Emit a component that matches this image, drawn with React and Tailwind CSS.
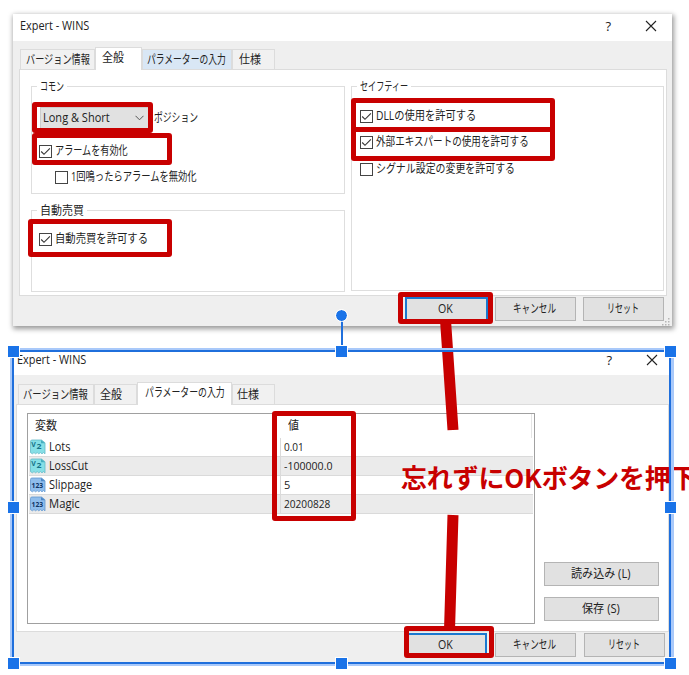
import { useLayoutEffect, useRef, useState } from 'react';
import clsx from 'clsx';

// Squeezes or stretches a single-line label to a fixed pixel width
function FitText({ w, className, children }) {
  const ref = useRef(null);
  const [scale, setScale] = useState(1);

  useLayoutEffect(() => {
    if (ref.current?.offsetWidth) setScale(w / ref.current.offsetWidth);
  }, [w, children]);

  return (
    <span className={clsx('block shrink-0 whitespace-nowrap', className)} style={{ width: w }}>
      <span ref={ref} className="inline-block origin-left" style={{ transform: `scaleX(${scale})` }}>
        {children}
      </span>
    </span>
  );
}

function Checkbox({ checked, label, w, className }) {
  return (
    <div className={clsx('flex h-[14px] items-center gap-[3px]', className)}>
      <span className="flex h-[13px] w-[13px] shrink-0 items-center justify-center border border-[#444] bg-white">
        {checked && (
          <svg viewBox="0 0 11 11" className="h-[11px] w-[11px]" fill="none" stroke="#333" strokeWidth="1.1">
            <path d="M1.2 5.5 4 8.3 9.9 2.4" />
          </svg>
        )}
      </span>
      <FitText w={w}>{label}</FitText>
    </div>
  );
}

function GroupBox({ title, titleWidth, className, children }) {
  return (
    <div className={clsx('border border-[#dedede]', className)}>
      <div className="-mt-[9px] ml-[5px] flex h-[18px] w-fit items-center bg-white px-[3px]">
        <FitText w={titleWidth}>{title}</FitText>
      </div>
      {children}
    </div>
  );
}

function Button({ label, w, primary, className }) {
  return (
    <button
      className={clsx(
        'flex h-[24px] shrink-0 items-center justify-center bg-[#e1e1e1] pr-[2px]',
        primary ? 'border-2 border-[#1a78d0]' : 'border border-[#b4b4b4]',
        className
      )}
    >
      <FitText w={w}>{label}</FitText>
    </button>
  );
}

function TitleBar({ className }) {
  return (
    <div className={clsx('flex items-center bg-white', className)}>
      <FitText w={69} className="text-[12px]">
        Expert - WINS
      </FitText>
      <span className="mr-[34px] ml-auto text-[13px] font-medium">?</span>
      <svg viewBox="0 0 12 12" className="h-[12px] w-[12px]" stroke="#222" strokeWidth="1.1">
        <path d="M1 1 11 11M11 1 1 11" />
      </svg>
    </div>
  );
}

function Tab({ label, w, active, hover, className }) {
  return (
    <div
      className={clsx(
        'flex shrink-0 border border-b-0 border-[#dcdcdc]',
        active ? 'z-10 -mb-px h-[23px] bg-white pt-[2px]' : 'h-[20px] items-center',
        hover && 'bg-[#d9e7f5]',
        !active && !hover && 'bg-[#f1f1f1]',
        className
      )}
    >
      <FitText w={w}>{label}</FitText>
    </div>
  );
}

function VarIcon({ type }) {
  const isDouble = type === 'double';
  return (
    <svg viewBox="0 0 16 16" className="h-[16px] w-[16px] shrink-0">
      <path
        d="M.5 2.5Q.5 1 2 1H11.5L15 3.8V14.8L13.5 13.6 12 14.8 10.4 13.6 8.8 14.8 7.2 13.6 5.6 14.8 4 13.6 2.4 14.8.5 13.6Z"
        fill={isDouble ? '#86dfe6' : '#8fbdec'}
        stroke={isDouble ? '#62b9c6' : '#5f97d0'}
        strokeWidth=".8"
      />
      <path d="M11 1 15 4.2H11Z" fill={isDouble ? '#45adbe' : '#4b87c7'} />
      {isDouble ? (
        <g fill="#17748a" fontWeight="bold" fontSize="7">
          <text x="1.2" y="8">V</text>
          <text x="6.6" y="10" textLength="5" lengthAdjust="spacingAndGlyphs">
            2
          </text>
        </g>
      ) : (
        <text x="1.6" y="11.2" fontSize="7" fontWeight="bold" fill="#0e3566" textLength="11.5" lengthAdjust="spacingAndGlyphs">
          123
        </text>
      )}
    </svg>
  );
}

const variables = [
  { name: 'Lots', nameWidth: 21, type: 'double', value: '0.01', valueWidth: 20 },
  { name: 'LossCut', nameWidth: 39, type: 'double', value: '-100000.0', valueWidth: 48 },
  { name: 'Slippage', nameWidth: 43, type: 'int', value: '5', valueWidth: 6 },
  { name: 'Magic', nameWidth: 31, type: 'int', value: '20200828', valueWidth: 46 },
];

function GeneralDialog() {
  return (
    <div className="flex h-[312px] w-[659px] flex-col bg-[#efefef] shadow-[1px_2px_5px_1px_rgba(0,0,0,0.4)]">
      <TitleBar className="h-[27px] pr-[15px] pb-[3px] pl-[7px]" />
      <div className="mt-[6px] ml-[7px] flex h-[22px] items-end">
        <Tab label="バージョン情報" w={64} className="w-[75px] pl-[5px]" />
        <Tab label="全般" w={22} active className="w-[47px] pl-[6px]" />
        <Tab label="パラメーターの入力" w={79} hover className="w-[90px] pl-[4px]" />
        <Tab label="仕様" w={22} className="w-[43px] pl-[6px]" />
      </div>
      <div className="ml-[6px] flex h-[227px] w-[648px] gap-[6px] border border-[#dcdcdc] bg-white pt-[16px] pl-[11px]">
        <div className="flex w-[314px] flex-col">
          <GroupBox title="コモン" titleWidth={24} className="h-[108px]">
            <div className="mt-[11px] ml-[8px] flex items-center gap-[4px]">
              <div className="flex h-[22px] w-[110px] items-center justify-between border border-[#ccc] bg-[#e1e1e1] pr-[5px] pl-[2px]">
                <FitText w={67}>Long &amp; Short</FitText>
                <svg viewBox="0 0 9 6" className="h-[6px] w-[9px]" fill="none" stroke="#555">
                  <path d="M.5.8 4.5 4.8 8.5.8" />
                </svg>
              </div>
              <FitText w={44}>ポジション</FitText>
            </div>
            <Checkbox checked label="アラームを有効化" w={73} className="mt-[15px] ml-[7px]" />
            <Checkbox label="1回鳴ったらアラームを無効化" w={126} className="mt-[12px] ml-[23px]" />
          </GroupBox>
          <GroupBox title="自動売買" titleWidth={44} className="mt-[16px] h-[82px]">
            <Checkbox checked label="自動売買を許可する" w={93} className="mt-[12px] ml-[7px]" />
          </GroupBox>
        </div>
        <GroupBox title="セイフティー" titleWidth={48} className="h-[205px] w-[313px]">
          <Checkbox checked label="DLLの使用を許可する" w={100} className="mt-[13px] ml-[8px]" />
          <Checkbox checked label="外部エキスパートの使用を許可する" w={153} className="mt-[12px] ml-[8px]" />
          <Checkbox label="シグナル設定の変更を許可する" w={139} className="mt-[13px] ml-[8px]" />
        </GroupBox>
      </div>
      <div className="mt-px flex justify-end gap-[7px] pr-[8px]">
        <Button label="OK" w={15} primary className="w-[83px]" />
        <Button label="キャンセル" w={43} className="w-[81px]" />
        <Button label="リセット" w={32} className="w-[81px]" />
      </div>
    </div>
  );
}

function InputsDialog() {
  return (
    <div className="flex h-[312px] w-[657px] flex-col bg-[#efefef]">
      <TitleBar className="h-[24px] pr-[12px] pb-[6px] pl-[4px]" />
      <div className="mt-[7px] ml-[5px] flex h-[22px] items-end">
        <Tab label="バージョン情報" w={65} className="w-[76px] pl-[4px]" />
        <Tab label="全般" w={22} className="w-[43px] pl-[5px]" />
        <Tab label="パラメーターの入力" w={80} active className="w-[95px] pl-[7px]" />
        <Tab label="仕様" w={22} className="w-[43px] pl-[4px]" />
      </div>
      <div className="ml-[3px] flex h-[228px] w-[653px] gap-[9px] border border-[#dcdcdc] bg-white pt-[8px] pl-[10px]">
        <div className="h-[211px] w-[508px] border border-[#a0a0a0] px-px">
          <div className="flex h-[24px] items-center pl-[6px]">
            <FitText w={22}>変数</FitText>
            <div className="ml-[217px] flex h-full items-center border-l border-[#e5e5e5] pl-[13px]">
              <FitText w={11}>値</FitText>
            </div>
            <div className="mr-px ml-auto h-full border-l border-[#e5e5e5]" />
          </div>
          {variables.map((v, i) => (
            <div key={v.name} className={clsx('flex h-[19px] items-center border-b border-[#dadada]', i % 2 && 'bg-[#ebebeb]')}>
              <div className="flex h-full w-[252px] items-center gap-[3px] border-r border-[#dadada] pl-px">
                <VarIcon type={v.type} />
                <FitText w={v.nameWidth}>{v.name}</FitText>
              </div>
              <FitText w={v.valueWidth} className="pl-[3px] text-[11px]">
                {v.value}
              </FitText>
            </div>
          ))}
        </div>
        <div className="mt-[149px] flex flex-col gap-[11px]">
          <Button label="読み込み (L)" w={59} className="w-[115px]" />
          <Button label="保存 (S)" w={38} className="w-[115px]" />
        </div>
      </div>
      <div className="mt-px flex justify-end gap-[8px] pr-[5px]">
        <Button label="OK" w={15} primary className="w-[82px]" />
        <Button label="キャンセル" w={43} className="w-[81px]" />
        <Button label="リセット" w={32} className="w-[81px]" />
      </div>
    </div>
  );
}

const markClass = 'absolute rounded-[3px] border-[5px] border-[#c80000]';
const handleClass = 'absolute h-[11px] w-[11px] bg-[#1a73e8] outline outline-white';

export default function App() {
  return (
    <div className="relative h-[675px] w-[689px] overflow-hidden bg-white pt-[14px] pl-[13px] font-['Open_Sans','Noto_Sans_CJK_JP',sans-serif] text-[12px] leading-[16px] text-[#222]">
      <GeneralDialog />
      {/* resize grip */}
      <svg viewBox="0 0 8 8" className="absolute top-[318px] left-[662px] h-[8px] w-[8px]" fill="#b5b5b5">
        <path d="M6 0h1.5v1.5H6zM3 3h1.5v1.5H3zM6 3h1.5v1.5H6zM0 6h1.5v1.5H0zM3 6h1.5v1.5H3zM6 6h1.5v1.5H6z" />
      </svg>
      <div className="mt-[25px]">
        <InputsDialog />
      </div>

      {/* highlight frames */}
      <div className={clsx(markClass, 'top-[102px] left-[32px] h-[31px] w-[121px]')} />
      <div className={clsx(markClass, 'top-[133px] left-[32px] h-[32px] w-[140px]')} />
      <div className={clsx(markClass, 'top-[219px] left-[28px] h-[38px] w-[144px]')} />
      <div className={clsx(markClass, 'top-[98px] left-[351px] h-[34px] w-[204px]')} />
      <div className={clsx(markClass, 'top-[127px] left-[351px] h-[34px] w-[204px]')} />
      <div className={clsx(markClass, 'top-[292px] left-[398px] h-[32px] w-[95px]')} />
      <div className={clsx(markClass, 'top-[411px] left-[272px] h-[110px] w-[84px]')} />
      <div className={clsx(markClass, 'top-[626px] left-[404px] h-[32px] w-[90px]')} />

      {/* connector strokes */}
      <svg viewBox="0 0 689 675" className="absolute inset-0 h-[675px] w-[689px]" stroke="#c80000" strokeWidth="11">
        <path d="M445.5 320 453 430M453 515 449.5 630" />
      </svg>

      <div className="absolute top-[460px] left-[401px] text-[26px] leading-[34px] font-bold whitespace-nowrap text-[#c80000]">
        <span className="font-['Noto_Sans_CJK_JP',sans-serif] tracking-[-0.2px]">忘れずにOKボタンを押下</span>
      </div>

      {/* selection outline and handles */}
      <div className="absolute top-[348px] left-[10px] h-[318px] w-[664px] border-t-2 border-r-[3px] border-b-2 border-l-2 border-[#a9c9fa]">
        <div className="h-full border-2 border-[#1f6fdc]" />
      </div>
      <div className="absolute top-[320px] left-[341px] h-[28px] w-[2px] bg-[#1f6fdc]" />
      <div className="absolute top-[310px] left-[336px] h-[11px] w-[11px] rounded-full bg-[#1a73e8] outline outline-white" />
      <div className={clsx(handleClass, 'top-[346px] left-[8px]')} />
      <div className={clsx(handleClass, 'top-[346px] left-[336px]')} />
      <div className={clsx(handleClass, 'top-[346px] left-[665px]')} />
      <div className={clsx(handleClass, 'top-[502px] left-[8px]')} />
      <div className={clsx(handleClass, 'top-[502px] left-[665px]')} />
      <div className={clsx(handleClass, 'top-[658px] left-[8px]')} />
      <div className={clsx(handleClass, 'top-[658px] left-[336px]')} />
      <div className={clsx(handleClass, 'top-[658px] left-[665px]')} />
    </div>
  );
}
